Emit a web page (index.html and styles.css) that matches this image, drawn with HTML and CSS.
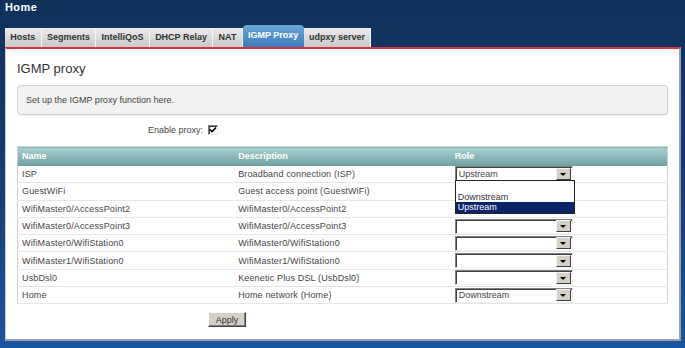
FILE: index.html
```html
<!DOCTYPE html>
<html lang="en">
<head>
    <meta charset="UTF-8">
    <title>Home - IGMP Proxy</title>
    <link rel="stylesheet" href="styles.css">
</head>
<body>
    <div class="page-title">Home</div>

    <div class="tabs">
        <a class="tab">Hosts</a>
        <a class="tab">Segments</a>
        <a class="tab">IntelliQoS</a>
        <a class="tab">DHCP Relay</a>
        <a class="tab">NAT</a>
        <a class="tab active">IGMP Proxy</a>
        <a class="tab">udpxy server</a>
    </div>

    <div class="panel">
        <h2>IGMP proxy</h2>
        <div class="info-box">Set up the IGMP proxy function here.</div>

        <div class="form-row">
            <label class="form-label">Enable proxy:</label>
            <span class="checkbox checked">
                <svg width="8" height="8" viewBox="0 0 8 8"><path d="M1 3.5 L3 5.5 L7 1.5" fill="none" stroke="#000" stroke-width="1.6"/></svg>
            </span>
        </div>

        <table class="grid">
            <thead>
                <tr><th>Name</th><th>Description</th><th>Role</th></tr>
            </thead>
            <tbody>
                <tr>
                    <td>ISP</td>
                    <td>Broadband connection (ISP)</td>
                    <td>
                        <div class="select open">
                            <span class="select-value">Upstream</span>
                            <span class="select-btn"><i></i></span>
                            <ul class="select-list">
                                <li>&nbsp;</li>
                                <li>Downstream</li>
                                <li class="selected">Upstream</li>
                            </ul>
                        </div>
                    </td>
                </tr>
                <tr><td>GuestWiFi</td><td>Guest access point (GuestWiFi)</td><td></td></tr>
                <tr><td>WifiMaster0/AccessPoint2</td><td>WifiMaster0/AccessPoint2</td><td></td></tr>
                <tr>
                    <td>WifiMaster0/AccessPoint3</td><td>WifiMaster0/AccessPoint3</td>
                    <td><div class="select"><span class="select-value"></span><span class="select-btn"><i></i></span></div></td>
                </tr>
                <tr>
                    <td>WifiMaster0/WifiStation0</td><td>WifiMaster0/WifiStation0</td>
                    <td><div class="select"><span class="select-value"></span><span class="select-btn"><i></i></span></div></td>
                </tr>
                <tr>
                    <td>WifiMaster1/WifiStation0</td><td>WifiMaster1/WifiStation0</td>
                    <td><div class="select"><span class="select-value"></span><span class="select-btn"><i></i></span></div></td>
                </tr>
                <tr>
                    <td>UsbDsl0</td><td>Keenetic Plus DSL (UsbDsl0)</td>
                    <td><div class="select"><span class="select-value"></span><span class="select-btn"><i></i></span></div></td>
                </tr>
                <tr>
                    <td>Home</td><td>Home network (Home)</td>
                    <td><div class="select"><span class="select-value">Downstream</span><span class="select-btn"><i></i></span></div></td>
                </tr>
            </tbody>
        </table>

        <div class="form-row buttons">
            <span class="form-label"></span>
            <button class="button">Apply</button>
        </div>
    </div>
</body>
</html>
```

FILE: styles.css
```css
* {
    margin: 0;
    padding: 0;
    box-sizing: border-box;
}

body {
    font-family: "Liberation Sans", Arial, sans-serif;
    font-size: 9px;
    color: #444;
    background: linear-gradient(to bottom, #10305a 0%, #143d72 50%, #1b55a0 100%);
    height: 348px;
    padding: 0 4px 0 5px;
    overflow: hidden;
}

.page-title {
    height: 24px;
    padding-top: 1px;
    color: #fff;
    font-weight: bold;
    font-size: 11px;
    letter-spacing: 0.4px;
    line-height: 12px;
}

.tabs {
    height: 23px;
    display: flex;
    align-items: flex-end;
}

.tab {
    height: 19px;
    line-height: 19px;
    padding: 0 5.3px;
    font-weight: bold;
    font-size: 9px;
    color: #333;
    background: linear-gradient(to bottom, #ececec, #c9c9c9);
    border-right: 1px solid #f4f4f4;
}

.tab.active {
    height: 22px;
    line-height: 21px;
    color: #fff;
    border-right: none;
    border-radius: 4px 4px 0 0;
    background: linear-gradient(to bottom, #6ba7d6, #3a7dbb);
}

.panel {
    background: #fff;
    border-top: 2px solid #d5343c;
    border-right: 2px solid #9aa0ac;
    border-bottom: 2px solid #9aa0ac;
    border-left: 1px solid #c8ccd4;
    height: 294px;
    padding: 12px 11px 0 11px;
}

h2 {
    font-size: 13px;
    font-weight: normal;
    color: #333;
    line-height: 16px;
    margin-bottom: 8px;
}

.info-box {
    height: 30px;
    line-height: 28px;
    padding-left: 8px;
    background: #f2f2f2;
    border: 1px solid #d2d2d2;
    border-radius: 4px;
    box-shadow: 1px 1px 1px rgba(0, 0, 0, 0.06);
    color: #444;
}

.form-row {
    display: flex;
    align-items: center;
    height: 14px;
    margin-top: 8px;
}

.form-label {
    width: 186px;
    text-align: right;
    margin-right: 5px;
    color: #444;
}

.checkbox {
    width: 10px;
    height: 10px;
    background: #fff;
    border-top: 1px solid #808080;
    border-left: 1px solid #808080;
    border-right: 1px solid #e8e8e8;
    border-bottom: 1px solid #e8e8e8;
    box-shadow: inset 1px 1px 0 #404040;
    display: flex;
    align-items: center;
    justify-content: center;
}

.grid {
    width: 100%;
    margin-top: 9px;
    border-collapse: collapse;
    border: 1px solid #cfcfcf;
    table-layout: fixed;
}

.grid th {
    height: 19px;
    text-align: left;
    padding: 0 4px;
    color: #fff;
    font-weight: bold;
    background: linear-gradient(to bottom, #a9d0d1, #6f9fa3);
}

.grid td {
    height: 17.3px;
    padding: 0 4px;
    border-bottom: 1px solid #e6e6e6;
    color: #444;
    letter-spacing: 0.15px;
    white-space: nowrap;
}

.select {
    position: relative;
    width: 118px;
    height: 15px;
    background: #fff;
    border-top: 1px solid #808080;
    border-left: 1px solid #808080;
    border-right: 1px solid #f0f0f0;
    border-bottom: 1px solid #f0f0f0;
    box-shadow: inset 1px 1px 0 #404040;
    display: flex;
    align-items: center;
    letter-spacing: 0;
}

.select-value {
    flex: 1;
    padding-left: 3px;
    color: #444;
}

.select-btn {
    width: 15px;
    height: 12px;
    margin-right: 1px;
    background: #d4d0c8;
    border-top: 1px solid #f4f4f4;
    border-left: 1px solid #f4f4f4;
    border-right: 1px solid #404040;
    border-bottom: 1px solid #404040;
    display: flex;
    align-items: center;
    justify-content: center;
}

.select-btn i {
    width: 0;
    height: 0;
    border-left: 3px solid transparent;
    border-right: 3px solid transparent;
    border-top: 3px solid #000;
    margin-top: 1px;
}

.select-list {
    position: absolute;
    top: 13px;
    left: -1px;
    width: 120px;
    list-style: none;
    background: #fff;
    border: 1px solid #222;
    z-index: 5;
}

.select-list li {
    height: 10.5px;
    line-height: 10.5px;
    padding-left: 2px;
    color: #333;
}

.select-list li.selected {
    background: #0a246a;
    color: #fff;
}

.buttons {
    margin-top: 8px;
    height: 15px;
}

.button {
    font-family: "Liberation Sans", Arial, sans-serif;
    font-size: 9px;
    color: #333;
    width: 38px;
    height: 15px;
    background: #d4d0c8;
    border-top: 1px solid #fff;
    border-left: 1px solid #fff;
    border-right: 1px solid #404040;
    border-bottom: 1px solid #404040;
    box-shadow: inset -1px -1px 0 #808080;
}
```
